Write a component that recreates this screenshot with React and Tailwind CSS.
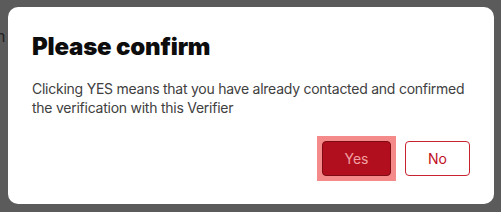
import React from 'react';

const App = () => {
    return (
        <div className="relative w-[501px] h-[212px] bg-[#5b5b5b] overflow-hidden" style={{ fontFamily: 'Inter, "Noto Sans", sans-serif' }}>
            {/* texto de la página detrás del overlay */}
            <span className="absolute left-[-4px] top-[24px] text-[16px] text-[#222]">h</span>

            <div className="absolute left-[8px] top-[7px] w-[486px] h-[197px] bg-white rounded-[10px] px-6 pt-6 pb-[23px] flex flex-col">
                <h2 className="text-[24px] leading-[32px] font-black text-[#0d0d0d] tracking-[-0.2px]">Please confirm</h2>
                <p className="mt-[16px] text-[14px] leading-[19px] tracking-[-0.25px] text-[#404040]">
                    Clicking YES means that you have already contacted and confirmed the verification with this Verifier
                </p>
                <div className="mt-auto flex justify-end items-center gap-[9px]">
                    <div className="p-[5px] bg-[#f48a8a]">
                        <button className="w-[69px] h-[35px] rounded-[4px] bg-[#b10f1d] border border-[#7e0a14] text-[#f2a0a3] text-[14px]">
                            Yes
                        </button>
                    </div>
                    <button className="w-[65px] h-[35px] rounded-[4px] bg-white border border-[#c8232f] text-[#bf101e] text-[14px]">
                        No
                    </button>
                </div>
            </div>
        </div>
    );
};

export default App;
